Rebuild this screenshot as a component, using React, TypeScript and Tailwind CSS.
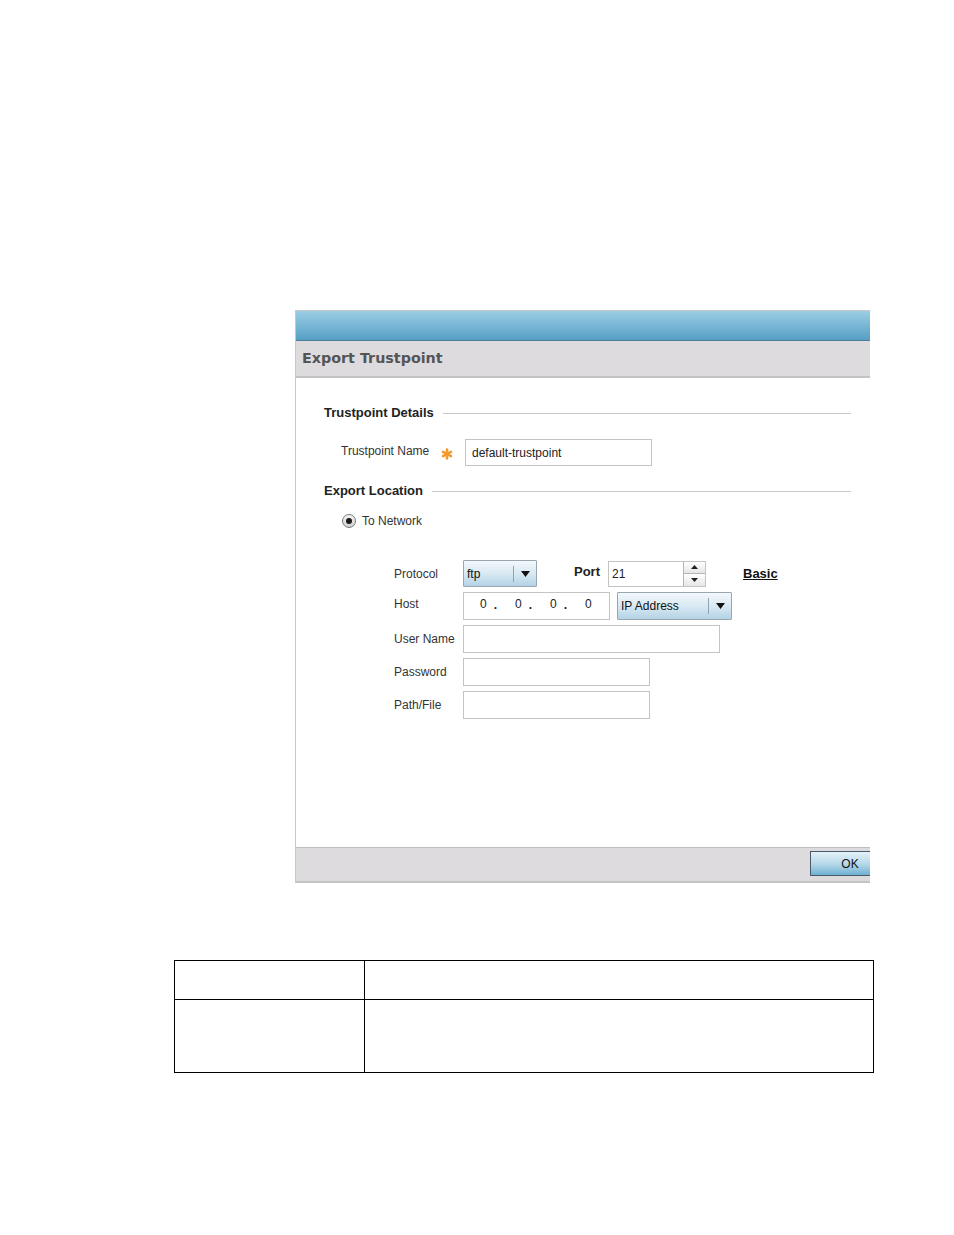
import React from 'react';

const label = 'text-[12px] text-[#333] leading-none';

const SectionHead: React.FC<{ title: string }> = ({ title }) => (
  <div className="flex items-center h-[16px] pr-[19px]">
    <span className="text-[13px] font-bold text-[#222] leading-none">{title}</span>
    <div className="flex-1 ml-[9px] h-px bg-[#c9c9c9] mt-[2px]" />
  </div>
);

const Select: React.FC<{ value: string; width: string; divider: string; h: string }> = ({ value, width, divider, h }) => (
  <div
    className={`${width} ${h} flex items-center border border-[#9aa6ae] bg-gradient-to-b from-[#f3f8fb] via-[#d9e9f3] to-[#b3d3e6] rounded-[1px]`}
  >
    <span className={`${divider} pl-[3px] text-[12px] text-[#111] leading-none`}>{value}</span>
    <div className="w-px h-[16px] bg-[#8fa3b0]" />
    <div className="flex-1 flex justify-center">
      <svg width="9" height="6" viewBox="0 0 9 6">
        <path d="M0 0h9L4.5 6z" fill="#111" />
      </svg>
    </div>
  </div>
);

const TextBox: React.FC<{ width: string; h?: string; children?: React.ReactNode }> = ({ width, h = 'h-[28px]', children }) => (
  <div className={`${width} ${h} border border-[#c4c4c4] bg-white flex items-center`}>{children}</div>
);

export default function App() {
  return (
    <div className="min-h-[1235px] bg-white pt-[310px] font-['Liberation_Sans',Arial,sans-serif]">
      {/* dialog */}
      <div className="ml-[295px] w-[575px] overflow-hidden border-l border-t border-[#c8c8c8]">
        <div className="h-[30px] border-b border-[#4d7f98] bg-gradient-to-b from-[#9bcde4] via-[#78b6d5] to-[#569fc4]" />
        <div className="h-[35px] bg-[#dddbde] flex items-center px-[6px]">
          <span className="font-['DejaVu_Sans',sans-serif] font-bold text-[14.3px] text-[#555]">
            Export Trustpoint
          </span>
        </div>
        <div className="h-[2px] bg-[#c3c3c3]" />

        <div className="h-[469px] bg-white pl-[28px] pt-[26px]">
          <SectionHead title="Trustpoint Details" />

          <div className="mt-[19px] h-[27px] flex items-center pl-[17px]">
            <span className={`${label} w-[100px] -mt-[4px]`}>Trustpoint Name</span>
            <svg width="12" height="12" viewBox="0 0 12 12" className="mt-[3px]">
              <g stroke="#f39a2e" strokeWidth="2.6" strokeLinecap="round">
                <path d="M6 1.5v9" />
                <path d="M2 3.8l8 4.4" />
                <path d="M10 3.8l-8 4.4" />
              </g>
            </svg>
            <div className="ml-[12px]">
              <TextBox width="w-[187px]" h="h-[27px]">
                <span className="pl-[6px] text-[12px] text-[#222] leading-none">default-trustpoint</span>
              </TextBox>
            </div>
          </div>

          <div className="mt-[16px]">
            <SectionHead title="Export Location" />
          </div>

          <div className="mt-[15px] h-[16px] flex items-center pl-[18px]">
            <div className="w-[14px] h-[14px] rounded-full border border-[#7a7a7a] bg-gradient-to-b from-[#f5f5f5] to-[#cfcfcf] flex items-center justify-center">
              <div className="w-[6px] h-[6px] rounded-full bg-[#1a1a1a]" />
            </div>
            <span className={`${label} ml-[6px]`}>To Network</span>
          </div>

          <div className="mt-[31px] pl-[70px] flex flex-col gap-[5px]">
            <div className="h-[27px] flex items-center">
              <span className={`${label} w-[69px]`}>Protocol</span>
              <Select value="ftp" width="w-[74px]" divider="w-[49px]" h="h-[27px]" />
              <span className="ml-[37px] text-[13px] font-bold text-[#222] leading-none -mt-[4px]">Port</span>
              <div className="ml-[8px] w-[98px] h-[26px] border border-[#c4c4c4] bg-white flex">
                <span className="flex-1 flex items-center pl-[3px] text-[12px] text-[#222] leading-none">21</span>
                <div className="w-[22px] flex flex-col border-l border-[#b5b5b5]">
                  <div className="flex-1 flex items-center justify-center border-b border-[#b5b5b5] bg-gradient-to-b from-white to-[#e6e6e6]">
                    <svg width="7" height="4" viewBox="0 0 7 4"><path d="M3.5 0L7 4H0z" fill="#222" /></svg>
                  </div>
                  <div className="flex-1 flex items-center justify-center bg-gradient-to-b from-white to-[#e6e6e6]">
                    <svg width="7" height="4" viewBox="0 0 7 4"><path d="M0 0h7L3.5 4z" fill="#222" /></svg>
                  </div>
                </div>
              </div>
              <span className="ml-[37px] text-[13px] font-bold text-[#111] underline leading-none">Basic</span>
            </div>

            <div className="h-[28px] flex items-center">
              <span className={`${label} w-[69px] -mt-[4px]`}>Host</span>
              <TextBox width="w-[147px]">
                <div className="flex pl-[16px] text-[12px] text-[#222] leading-none -mt-[4px]">
                  {[0, 1, 2].map((i) => (
                    <span key={i} className="w-[35px] flex">
                      <span>0</span>
                      <span className="ml-[7px] mt-[1px] font-bold">.</span>
                    </span>
                  ))}
                  <span>0</span>
                </div>
              </TextBox>
              <div className="ml-[7px]">
                <Select value="IP Address" width="w-[115px]" divider="w-[90px]" h="h-[28px]" />
              </div>
            </div>

            <div className="h-[28px] flex items-center">
              <span className={`${label} w-[69px]`}>User Name</span>
              <TextBox width="w-[257px]" />
            </div>
            <div className="h-[28px] flex items-center">
              <span className={`${label} w-[69px]`}>Password</span>
              <TextBox width="w-[187px]" />
            </div>
            <div className="h-[28px] flex items-center">
              <span className={`${label} w-[69px]`}>Path/File</span>
              <TextBox width="w-[187px]" />
            </div>
          </div>
        </div>

        <div className="border-t border-[#bdbdbd] border-b-2 border-b-[#c3c3c3] h-[36px] bg-[#dddbde] pl-[514px] pt-[3px]">
          <div className="w-[80px] h-[25px] border border-[#4a5a66] bg-gradient-to-b from-[#e4f1f8] via-[#b9d9ea] to-[#6fb0d2] flex items-center justify-center">
            <span className="text-[12px] text-[#111] leading-none">OK</span>
          </div>
        </div>
      </div>

      {/* table */}
      <div className="ml-[174px] mt-[77px] w-[700px] border border-black">
        <div className="flex h-[39px] border-b border-black">
          <div className="w-[190px] border-r border-black" />
          <div className="flex-1" />
        </div>
        <div className="flex h-[72px]">
          <div className="w-[190px] border-r border-black" />
          <div className="flex-1" />
        </div>
      </div>
    </div>
  );
}
